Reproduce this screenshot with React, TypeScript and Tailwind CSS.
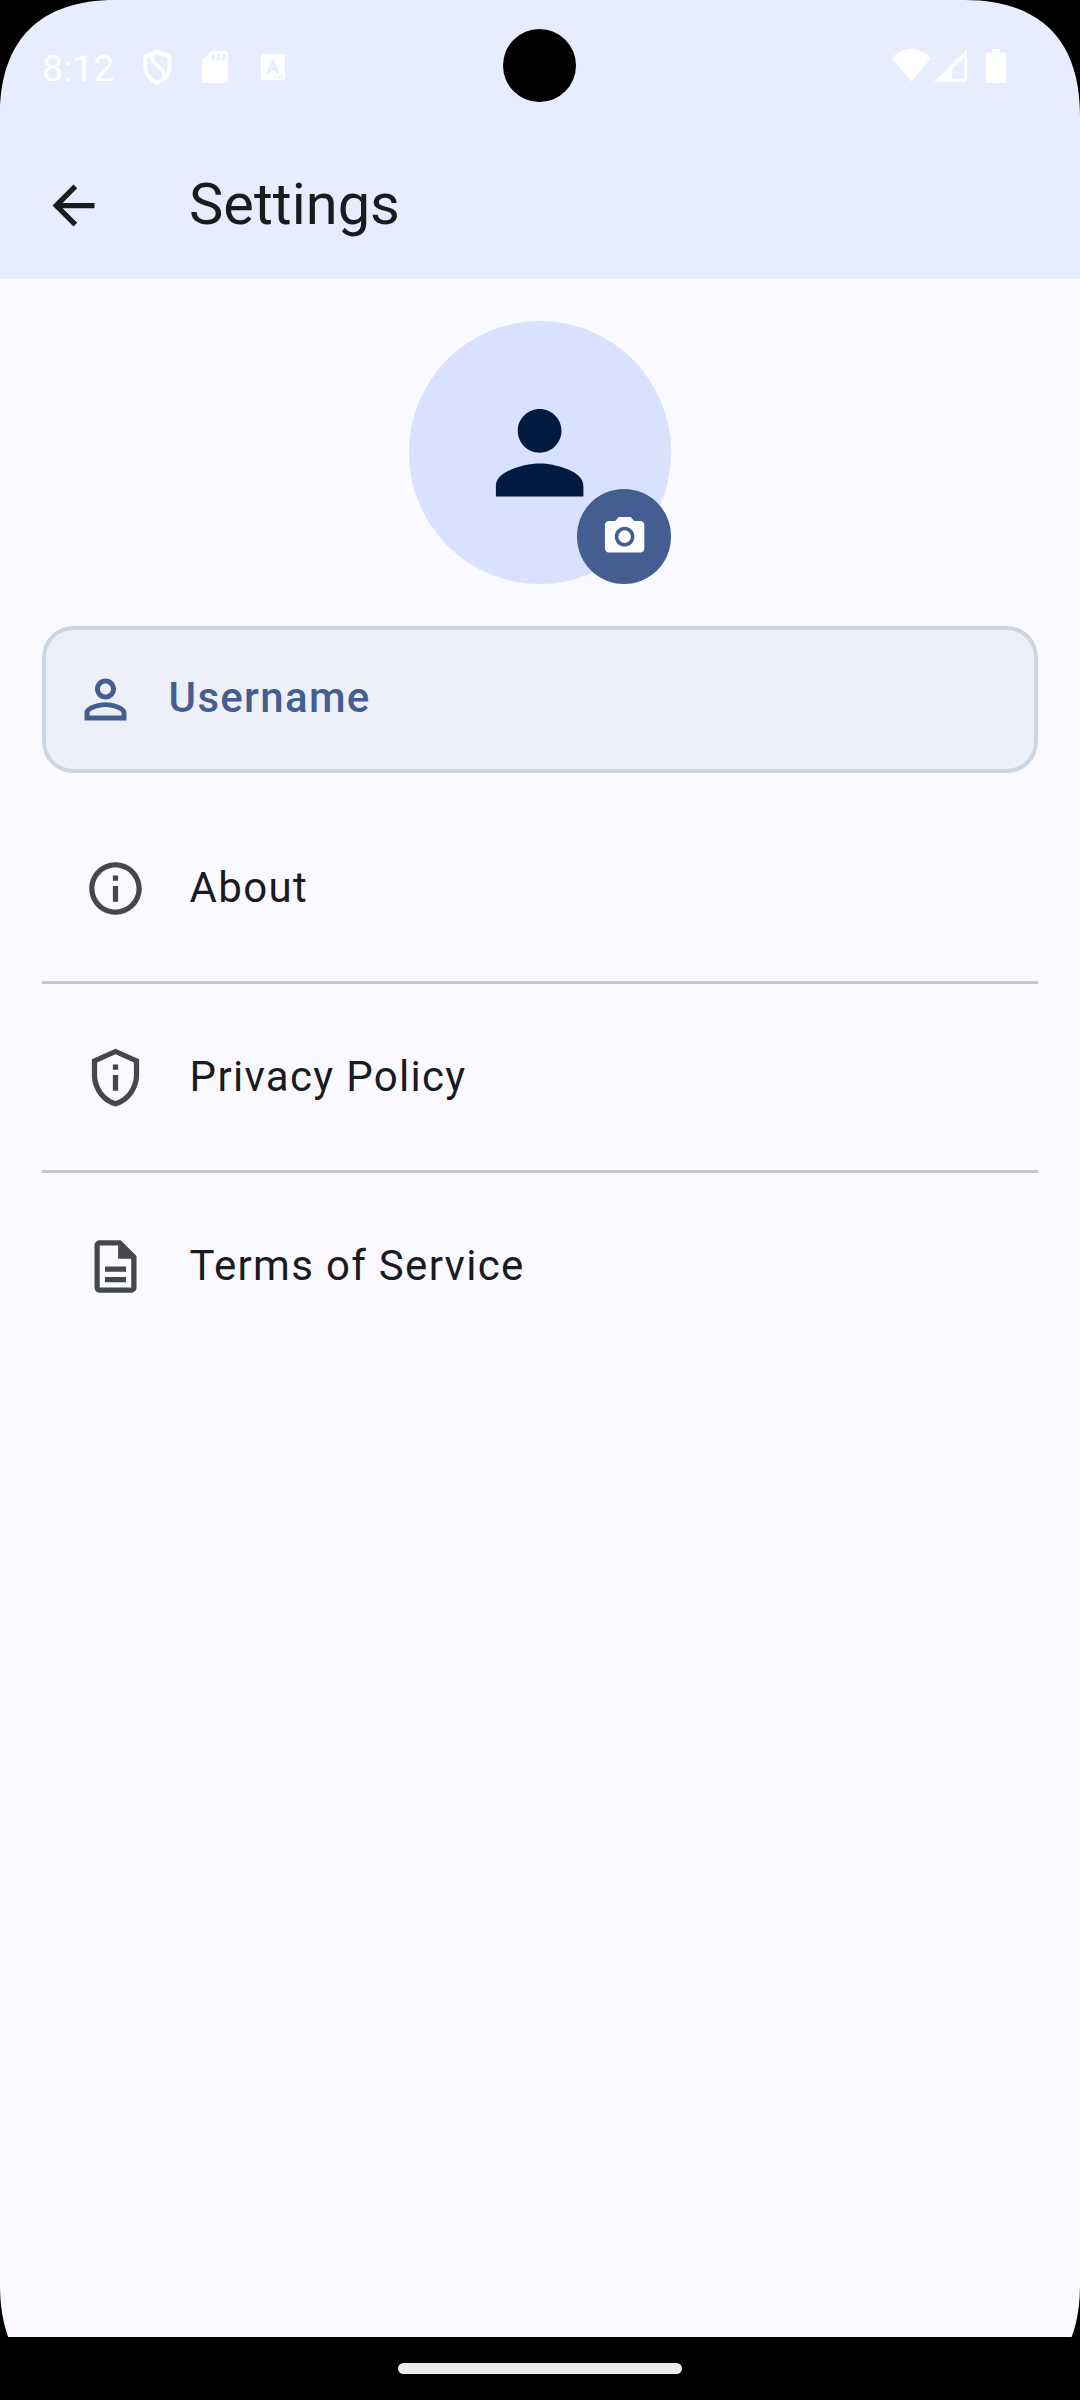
import type { ReactNode } from "react";

const paths = {
  back: "M20 11H7.83l5.59-5.59L12 4l-8 8 8 8 1.41-1.41L7.83 13H20v-2z",
  person:
    "M12 12c2.21 0 4-1.79 4-4s-1.79-4-4-4-4 1.79-4 4 1.79 4 4 4zm0 2c-2.67 0-8 1.34-8 4v2h16v-2c0-2.66-5.33-4-8-4z",
  personOutline:
    "M12 5.9c1.16 0 2.1.94 2.1 2.1s-.94 2.1-2.1 2.1S9.9 9.16 9.9 8s.94-2.1 2.1-2.1m0 9c2.97 0 6.1 1.46 6.1 2.1v1.1H5.9V17c0-.64 3.13-2.1 6.1-2.1M12 4C9.79 4 8 5.79 8 8s1.79 4 4 4 4-1.79 4-4-1.79-4-4-4zm0 9c-2.67 0-8 1.34-8 4v3h16v-3c0-2.66-5.33-4-8-4z",
  camera:
    "M12 8.8a3.2 3.2 0 1 0 0 6.4a3.2 3.2 0 1 0 0-6.4zM9 2L7.17 4H4c-1.1 0-2 .9-2 2v12c0 1.1.9 2 2 2h16c1.1 0 2-.9 2-2V6c0-1.1-.9-2-2-2h-3.17L15 2H9zm3 15c-2.76 0-5-2.24-5-5s2.24-5 5-5 5 2.24 5 5-2.24 5-5 5z",
  info: "M11 7h2v2h-2zm0 4h2v6h-2zm1-9C6.48 2 2 6.48 2 12s4.48 10 10 10 10-4.48 10-10S17.52 2 12 2zm0 18c-4.41 0-8-3.59-8-8s3.59-8 8-8 8 3.59 8 8-3.59 8-8 8z",
  privacy:
    "M12 3.19l7 3.11V11c0 4.52-2.98 8.69-7 9.93-4.02-1.24-7-5.41-7-9.93V6.3l7-3.11M12 1L3 5v6c0 5.55 3.84 10.74 9 12 5.16-1.26 9-6.45 9-12V5l-9-4zm-1 6h2v2h-2V7zm0 4h2v6h-2v-6z",
  description:
    "M8 16h8v2H8zm0-4h8v2H8zm6-10H6c-1.1 0-2 .9-2 2v16c0 1.1.89 2 1.99 2H18c1.1 0 2-.9 2-2V8l-6-6zm4 18H6V4h7v5h5v11z",
};

function Icon({ d, className }: { d: string; className: string }) {
  return (
    <svg viewBox="0 0 24 24" fill="currentColor" className={`shrink-0 ${className}`}>
      <path d={d} />
    </svg>
  );
}

function StatusBar() {
  return (
    <div className="relative flex h-[132px] items-start text-white">
      <span className="ml-[42px] mt-[46px] w-[76px] text-[37.5px] leading-[44px] whitespace-nowrap">8:12</span>
      <svg className="ml-[24px] mt-[49px] h-[37px] w-[31px]" viewBox="0 0 31 37" fill="none" stroke="currentColor" strokeWidth="4" strokeLinejoin="round">
        <path d="M15.4 3L27.5 7.2V17.5C27.5 25 22 31 15.4 34C9 31 3.2 25 3.2 17.5V7.2Z" />
        <path d="M9.8 5.5C9.6 11 12 14 16 17C20.5 20.5 23 24 21.8 29" />
      </svg>
      <svg className="ml-[29px] mt-[51px] h-[32px] w-[26px]" viewBox="0 0 26 32" fill="currentColor" fillRule="evenodd">
        <path d="M9.5 0H23.5Q26 0 26 2.5V29.5Q26 32 23.5 32H2.5Q0 32 0 29.5V9.5ZM10 3.2V9.7H13V3.2ZM15 3.2V9.7H18V3.2ZM20 3.2V9.7H23V3.2Z" />
      </svg>
      <svg className="ml-[33px] mt-[54px] h-[26px] w-[24px]" viewBox="0 0 24 26">
        <rect width="24" height="26" rx="1.5" fill="currentColor" />
        <path d="M7.4 18.2L12 7.3L16.6 18.2M9 15H15" fill="none" stroke="#e7edff" strokeWidth="3.2" strokeLinecap="round" strokeLinejoin="round" />
        <path d="M12.8 22.2h2v2h-2zM16.4 22.2h2v2h-2zM20 22.2h2v2h-2z" fill="#e7edff" />
      </svg>
      <svg className="ml-auto mt-[49px] h-[33px] w-[39px]" viewBox="0 0 39 33" fill="currentColor">
        <path d="M19.5 32.5L0 9.2C5 3.4 11.8 0 19.5 0S34 3.4 39 9.2Z" />
      </svg>
      <svg className="ml-[3px] mt-[49px] h-[33px] w-[33px]" viewBox="0 0 33 33" fill="currentColor" fillRule="evenodd">
        <path d="M33 0.6V33H0ZM30 8.5L18 20.3V29.7H30Z" />
      </svg>
      <svg className="ml-[19px] mr-[74px] mt-[49px] h-[34px] w-[20px]" viewBox="0 0 20 34" fill="currentColor">
        <path d="M6 0H14V3.5H18Q20 3.5 20 5.5V32Q20 34 18 34H2Q0 34 0 32V5.5Q0 3.5 2 3.5H6Z" />
      </svg>
      <div className="absolute left-[503px] top-[29px] size-[73px] rounded-full bg-black" />
    </div>
  );
}

function Row({ icon, children }: { icon: string; children: ReactNode }) {
  return (
    <div className="flex h-[186.4px] items-center pl-[42px] text-[#44474f]">
      <Icon d={icon} className="size-[63px]" />
      <span className="mb-[2px] ml-[42.6px] text-[42px] leading-[63px] tracking-[1.31px] text-[#1a1b20]">{children}</span>
    </div>
  );
}

function Divider() {
  return <div className="h-[2.6px] bg-[#c4c6d0]" />;
}

function Corner({ className }: { className: string }) {
  return (
    <svg className={`absolute size-[115px] ${className}`} viewBox="0 0 115 115">
      <path d="M0 0H115C40 0 0 40 0 115Z" fill="#000" />
    </svg>
  );
}

export default function App() {
  return (
    <div className="relative flex h-[2400px] w-[1080px] flex-col overflow-hidden bg-[#faf9ff] font-[Roboto,sans-serif]">
      <header className="h-[279px] bg-[#e7edff]">
        <StatusBar />
        <div className="flex h-[147px] items-center pl-[42px] text-[#1a1b20]">
          <Icon d={paths.back} className="size-[63px]" />
          <h1 className="mb-[2px] ml-[84px] text-[57.75px] leading-[73.5px]">Settings</h1>
        </div>
      </header>

      <main className="flex grow flex-col px-[42px] pt-[42px]">
        <div className="relative flex size-[262.5px] items-center justify-center self-center rounded-full bg-[#d8e2ff] text-[#001a41]">
          <Icon d={paths.person} className="size-[131.25px]" />
          <div className="absolute bottom-0 right-0 flex size-[94.5px] items-center justify-center rounded-full bg-[#445e91] text-white">
            <Icon d={paths.camera} className="ml-[1px] size-[47.25px]" />
          </div>
        </div>

        <div className="mt-[42.5px] flex h-[147px] items-center rounded-[31.5px] border-4 border-[#ccd5e5] bg-[#edf0f8] pl-[27.5px] text-[#445e91]">
          <Icon d={paths.personOutline} className="size-[63px]" />
          <span className="mb-[4px] ml-[32.1px] text-[42px] font-medium leading-[63px] tracking-[1.31px]">Username</span>
        </div>

        <div className="mt-[22px]">
          <Row icon={paths.info}>About</Row>
          <Divider />
          <Row icon={paths.privacy}>Privacy Policy</Row>
          <Divider />
          <Row icon={paths.description}>Terms of Service</Row>
        </div>
      </main>

      <footer className="flex h-[63px] items-center justify-center bg-black">
        <div className="h-[11px] w-[284px] rounded-full bg-[#ebebeb]" />
      </footer>

      <Corner className="left-0 top-0" />
      <Corner className="right-0 top-0 rotate-90" />
      <Corner className="bottom-0 left-0 -rotate-90" />
      <Corner className="bottom-0 right-0 rotate-180" />
    </div>
  );
}
